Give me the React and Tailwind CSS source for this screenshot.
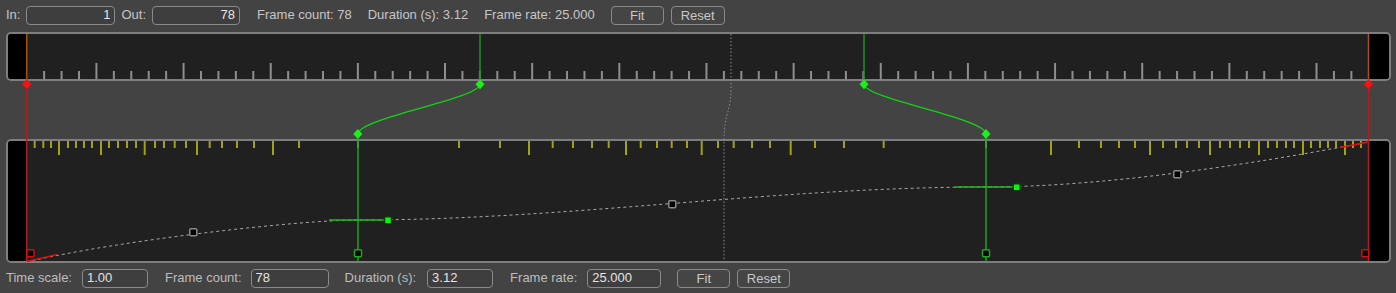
import React from "react";

// frame n sits at x = X0 + (n - 1) * STEP on the source ruler
const X0 = 26.7;
const STEP = 17.43;

// warped frame positions on the output ruler, frames 2..77
const outTicks = [
  34.7, 43.3, 51, 59, 68, 76, 84, 92, 101, 109, 118, 127, 136, 144.7, 155, 164,
  174.7, 186, 197, 209.7, 222, 237, 254, 273, 299, 358, 459, 500, 529, 552.7,
  573, 592, 608.7, 626, 640.7, 657, 671.7, 687, 701.7, 718, 733.7, 752, 770,
  790.7, 815, 844, 883.7, 986, 1051, 1079, 1101, 1119, 1135, 1150, 1163, 1176,
  1187, 1199, 1210, 1220, 1230, 1240, 1249, 1259, 1268, 1277, 1286, 1294, 1303,
  1311, 1320, 1328, 1336, 1345, 1353, 1361,
];

const Diamond = ({ x, y, color }) => (
  <polygon
    points={`${x},${y - 5} ${x + 4.5},${y} ${x},${y + 5} ${x - 4.5},${y}`}
    fill={color}
  />
);

const Square = ({ x, y, stroke, fill = "#000" }) => (
  <rect
    x={x - 3.5}
    y={y - 3.5}
    width="7"
    height="7"
    rx="1"
    fill={fill}
    stroke={stroke}
    strokeWidth="1.5"
  />
);

const Field = ({ value, w, right }) => (
  <input
    readOnly
    value={value}
    className={`h-[19px] ${w} rounded-[4px] border border-[#8a8a8a] bg-[#3e3e3e] text-[13px] text-[#e4e4e4] outline-none ${
      right ? "text-right pr-[4px]" : "pl-[4px]"
    }`}
  />
);

const Btn = ({ label, className }) => (
  <button
    className={`h-[19px] w-[53px] rounded-[4px] border border-[#8a8a8a] bg-[#454545] text-[13px] text-[#c8c8c8] leading-none ${className}`}
  >
    {label}
  </button>
);

const Overlay = () => {
  const topTicks = [];
  for (let n = 2; n <= 77; n++) {
    const x = X0 + (n - 1) * STEP;
    topTicks.push(
      <line
        key={n}
        x1={x}
        x2={x}
        y1={n % 5 === 0 ? 63 : 71}
        y2={79.5}
        stroke="#8e8e8e"
        strokeWidth="2"
      />
    );
  }

  return (
    <svg
      className="absolute inset-0"
      width="1396"
      height="233"
      viewBox="0 30 1396 233"
    >
      {topTicks}
      {outTicks.map((x, i) => (
        <line
          key={i}
          x1={x}
          x2={x}
          y1={141}
          y2={(i + 2) % 5 === 0 ? 155 : 148}
          stroke="#a3a311"
          strokeWidth="2"
        />
      ))}

      {/* playhead, dotted */}
      <path
        d="M731,34 L731,88 C731,112 724,114 724,140 L724,261"
        fill="none"
        stroke="#8c8c8c"
        strokeWidth="1"
        strokeDasharray="1.5 2"
      />

      {/* in / out markers */}
      <line x1="26.7" x2="26.7" y1="34" y2="80" stroke="#a5540f" strokeWidth="1.5" />
      <line x1="1368.5" x2="1368.5" y1="34" y2="80" stroke="#a5540f" strokeWidth="1.5" />
      <line x1="26.7" x2="26.7" y1="84" y2="261" stroke="#b21c1c" strokeWidth="1.5" />
      <line x1="1368.5" x2="1368.5" y1="84" y2="261" stroke="#b21c1c" strokeWidth="1.5" />

      {/* sync markers */}
      <line x1="480" x2="480" y1="34" y2="84" stroke="#1f901f" strokeWidth="1.5" />
      <line x1="864" x2="864" y1="34" y2="84" stroke="#1f901f" strokeWidth="1.5" />
      <path d="M480,84 C480,99 358,118 358,134" fill="none" stroke="#12d312" strokeWidth="1.3" />
      <path d="M864,84 C864,99 986,118 986,134" fill="none" stroke="#12d312" strokeWidth="1.3" />
      <line x1="358" x2="358" y1="134" y2="261" stroke="#20a020" strokeWidth="1.5" />
      <line x1="986" x2="986" y1="134" y2="261" stroke="#20a020" strokeWidth="1.5" />

      {/* speed curve */}
      <path
        d="M26.7,262 C120,240 300,220 358,220 C568,220 776,187 986,187 C1100,187 1250,165 1368,142"
        fill="none"
        stroke="#a8a8a8"
        strokeWidth="1"
        strokeDasharray="3 3"
      />
      <line x1="26.7" y1="261.5" x2="57" y2="254.5" stroke="#e01010" strokeWidth="1.3" />
      <line x1="1340" y1="147.5" x2="1368" y2="142" stroke="#e01010" strokeWidth="1.3" />
      <line x1="329" x2="388" y1="220" y2="220" stroke="#22b822" strokeWidth="1.5" />
      <line x1="955" x2="1016.7" y1="187" y2="187" stroke="#22b822" strokeWidth="1.5" />

      <Square x={193.3} y={232.3} stroke="#8a8a8a" />
      <Square x={672.3} y={204.3} stroke="#8a8a8a" />
      <Square x={1177.3} y={174.3} stroke="#8a8a8a" />
      <Square x={388} y={220.3} stroke="#0a3a0a" fill="#12f012" />
      <Square x={1016.7} y={187.3} stroke="#0a3a0a" fill="#12f012" />
      <Square x={30.5} y={253.3} stroke="#d01010" />
      <Square x={1365.3} y={253.3} stroke="#d01010" />
      <Square x={358} y={253.3} stroke="#1ea81e" />
      <Square x={986} y={253.3} stroke="#1ea81e" />

      <Diamond x={26.8} y={84.3} color="#ff1010" />
      <Diamond x={1368.5} y={84.3} color="#ff1010" />
      <Diamond x={480} y={84.3} color="#1af01a" />
      <Diamond x={864} y={84.3} color="#1af01a" />
      <Diamond x={357.8} y={134} color="#1af01a" />
      <Diamond x={986} y={134} color="#1af01a" />
    </svg>
  );
};

export default function App() {
  return (
    <div className="w-[1396px] h-[293px] overflow-hidden bg-[#434343] font-['Liberation_Sans',Arial,sans-serif] text-[13px] text-[#c6c6c6]">
      <div className="flex h-[30px] items-center pl-[6px]">
        <span>In:</span>
        <div className="ml-[6px]">
          <Field value="1" w="w-[89px]" right />
        </div>
        <span className="ml-[6px]">Out:</span>
        <div className="ml-[6px]">
          <Field value="78" w="w-[88px]" right />
        </div>
        <span className="ml-[17px]">Frame count: 78</span>
        <span className="ml-[16px]">Duration (s): 3.12</span>
        <span className="ml-[16px]">Frame rate: 25.000</span>
        <Btn label="Fit" className="ml-[16px]" />
        <Btn label="Reset" className="ml-[7px] w-[54px]" />
      </div>

      <div className="relative flex h-[233px] flex-col pt-[2px]">
        <div className="ml-[6px] flex h-[49px] w-[1385px] overflow-hidden rounded-[5px] border-2 border-[#7e7e7e] bg-[#202020]">
          <div className="w-[18px] bg-black" />
          <div className="flex-1" />
          <div className="w-[20px] bg-black" />
        </div>
        <div className="ml-[6px] mt-[58px] flex h-[124px] w-[1385px] overflow-hidden rounded-[5px] border-2 border-[#7e7e7e] bg-[#202020]">
          <div className="w-[18px] bg-black" />
          <div className="flex-1" />
          <div className="w-[20px] bg-black" />
        </div>
        <Overlay />
      </div>

      <div className="flex h-[30px] items-center pl-[6px] text-[#bdbdbd]">
        <span>Time scale:</span>
        <div className="ml-[10px]">
          <Field value="1.00" w="w-[66px]" />
        </div>
        <span className="ml-[17px]">Frame count:</span>
        <div className="ml-[9px]">
          <Field value="78" w="w-[78px]" />
        </div>
        <span className="ml-[16px]">Duration (s):</span>
        <div className="ml-[11px]">
          <Field value="3.12" w="w-[66px]" />
        </div>
        <span className="ml-[17px]">Frame rate:</span>
        <div className="ml-[10px]">
          <Field value="25.000" w="w-[74px]" />
        </div>
        <Btn label="Fit" className="ml-[16px]" />
        <Btn label="Reset" className="ml-[7px]" />
      </div>
    </div>
  );
}
